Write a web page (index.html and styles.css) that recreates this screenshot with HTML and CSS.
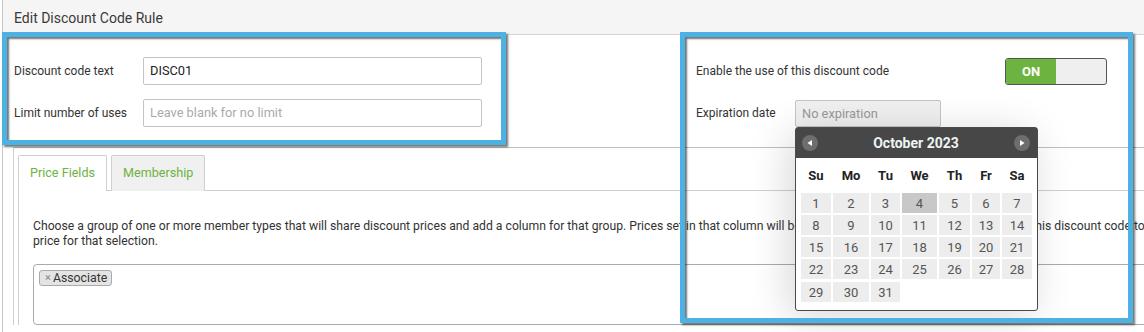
FILE: index.html
```html
<!DOCTYPE html>
<html>
<head>
<meta charset="utf-8">
<link rel="stylesheet" href="styles.css">
</head>
<body>
<div class="page">
  <div class="panel">
    <div class="header">Edit Discount Code Rule</div>
    <div class="top">
      <div class="col-left">
        <div class="field"><span class="lbl">Discount code text</span><div class="input">DISC01</div></div>
        <div class="field"><span class="lbl">Limit number of uses</span><div class="input placeholder">Leave blank for no limit</div></div>
      </div>
      <div class="col-right">
        <div class="field"><span class="lbl-r">Enable the use of this discount code</span>
          <div class="toggle"><span class="on">ON</span><span class="off"></span></div>
        </div>
        <div class="field"><span class="lbl-r2">Expiration date</span>
          <div class="date-wrap">
            <div class="input date placeholder">No expiration</div>
            <div class="datepicker">
              <div class="dp-head">
                <span class="dp-nav"><svg width="16" height="16" viewBox="0 0 16 16"><circle cx="8" cy="8" r="8" fill="#6e6e6e"/><path d="M5.5 8 L10 5 L10 11 Z" fill="#fff"/></svg></span>
                <span class="dp-title">October 2023</span>
                <span class="dp-nav"><svg width="16" height="16" viewBox="0 0 16 16"><circle cx="8" cy="8" r="8" fill="#6e6e6e"/><path d="M10.5 8 L6 5 L6 11 Z" fill="#fff"/></svg></span>
              </div>
              <div class="dp-body">
                <div class="dp-names"><span>Su</span><span>Mo</span><span>Tu</span><span>We</span><span>Th</span><span>Fr</span><span>Sa</span></div>
                <div class="dp-days">
                  <span>1</span><span>2</span><span>3</span><span class="today">4</span><span>5</span><span>6</span><span>7</span>
                  <span>8</span><span>9</span><span>10</span><span>11</span><span>12</span><span>13</span><span>14</span>
                  <span>15</span><span>16</span><span>17</span><span>18</span><span>19</span><span>20</span><span>21</span>
                  <span>22</span><span>23</span><span>24</span><span>25</span><span>26</span><span>27</span><span>28</span>
                  <span>29</span><span>30</span><span>31</span>
                </div>
              </div>
            </div>
          </div>
        </div>
      </div>
    </div>
    <div class="tabs-section">
      <div class="tabs"><div class="tab active">Price Fields</div><div class="tab">Membership</div></div>
      <div class="tab-content">
        <p class="desc">Choose a group of one or more member types that will share discount prices and add a column for that group. Prices set in that column will be applied to the member's price when using this discount code to determine the<br>price for that selection.</p>
        <div class="tagbox"><span class="tag"><span class="x">×</span>Associate</span></div>
      </div>
    </div>
  </div>
  <div class="hl hl-left"></div>
  <div class="hl hl-right"></div>
</div>
</body>
</html>
```

FILE: styles.css
```css
html, body {
  margin: 0;
  padding: 0;
  background: #fff;
  overflow: hidden;
}
body {
  font-family: Roboto, "Liberation Sans", Arial, sans-serif;
  color: #333;
  width: 1144px;
  height: 332px;
}
.page {
  position: relative;
  width: 1400px;
  height: 332px;
}
.panel {
  margin-left: 2px;
  border-left: 1px solid #c8c8c8;
  height: 332px;
}
.header {
  height: 34px;
  line-height: 36px;
  background: #f5f5f5;
  border-bottom: 1px solid #d6d6d6;
  padding-left: 11px;
  font-size: 14px;
  color: #3a3a3a;
}
.top {
  display: flex;
  height: 112px;
}
.col-left {
  width: 682px;
  padding: 22px 0 0 11px;
  display: flex;
  flex-direction: column;
  gap: 14px;
}
.field {
  display: flex;
  align-items: center;
  height: 28px;
}
.lbl {
  width: 129px;
  font-size: 12px;
}
.input {
  box-sizing: border-box;
  width: 339px;
  height: 28px;
  border: 1px solid #c4c4c4;
  border-radius: 2px;
  padding-left: 6px;
  font-size: 12.8px;
  line-height: 26px;
  color: #222;
  background: #fff;
}
.input.placeholder {
  color: #aaa;
}
.col-right {
  padding-top: 22px;
  display: flex;
  flex-direction: column;
  gap: 14px;
}
.lbl-r {
  width: 309px;
  font-size: 12px;
}
.lbl-r2 {
  width: 99px;
  font-size: 12px;
}
.toggle {
  box-sizing: border-box;
  width: 102px;
  height: 27px;
  border: 1px solid #555;
  border-radius: 3px;
  display: flex;
  overflow: hidden;
  background: #efefef;
}
.toggle .on {
  width: 50px;
  background: #6db33f;
  color: #fff;
  font-weight: bold;
  font-size: 13px;
  text-align: center;
  line-height: 25px;
}
.date-wrap {
  position: relative;
}
.input.date {
  width: 146px;
  height: 27px;
  background: #f0f0f0;
  line-height: 25px;
  color: #999;
}
.datepicker {
  position: absolute;
  top: 100%;
  left: 0;
  box-sizing: border-box;
  width: 243px;
  height: 184px;
  border: 1px solid #4a4a4a;
  border-radius: 3px;
  background: #fff;
  box-shadow: -6px 6px 40px rgba(0, 0, 0, 0.16);
  z-index: 2;
}
.dp-head {
  height: 30px;
  background: #474747;
  display: flex;
  align-items: center;
  justify-content: space-between;
  padding: 0 7px 0 6px;
}
.dp-nav {
  display: flex;
  width: 16px;
  height: 16px;
}
.dp-title {
  color: #eef3f5;
  font-weight: bold;
  font-size: 14px;
}
.dp-body {
  padding: 0 5px;
}
.dp-names, .dp-days {
  display: grid;
  grid-template-columns: 30px 36px 29px 35px 31px 28px 30px;
  column-gap: 2px;
}
.dp-names {
  height: 35px;
  align-items: center;
}
.dp-names span {
  text-align: center;
  font-weight: bold;
  font-size: 13px;
  color: #222;
}
.dp-days {
  grid-auto-rows: 20px;
  row-gap: 2.3px;
}
.dp-days span {
  background: #ededed;
  color: #555;
  font-size: 13px;
  line-height: 21px;
  text-align: center;
}
.dp-days span.today {
  background: #c8c8c8;
}
.tabs-section {
  margin-left: 10px;
  border-top: 1px solid #bdbdbd;
  border-left: 1px solid #cfcfcf;
  padding: 7px 0 0 4px;
}
.tabs {
  display: flex;
  gap: 4px;
  height: 35px;
}
.tab {
  box-sizing: border-box;
  height: 36px;
  border: 1px solid #cfcfcf;
  border-bottom: none;
  border-radius: 2px 2px 0 0;
  padding: 0 11px;
  font-size: 12.6px;
  line-height: 34px;
  white-space: nowrap;
  color: #6db33f;
  background: #f0f0f0;
}
.tab.active {
  background: #fff;
  position: relative;
  z-index: 1;
}
.tab-content {
  border-top: 1px solid #cfcfcf;
  border-left: 1px solid #cfcfcf;
  padding: 28px 0 0 14px;
}
.desc {
  margin: 0;
  font-size: 12.2px;
  line-height: 15px;
  color: #333;
  white-space: nowrap;
}
.tagbox {
  margin-top: 15px;
  box-sizing: border-box;
  height: 61px;
  border: 1px solid #aaa;
  border-radius: 4px;
  padding: 5px;
}
.tag {
  display: inline-flex;
  align-items: center;
  box-sizing: border-box;
  height: 16px;
  padding: 0 4px 0 5px;
  border: 1px solid #aaa;
  border-radius: 3px;
  background: #e4e4e4;
  font-size: 12.3px;
  line-height: 14px;
  color: #333;
  vertical-align: top;
}
.tag .x {
  color: #888;
  font-size: 11px;
  margin-right: 2px;
}
.hl {
  position: absolute;
  box-sizing: border-box;
  border: 5px solid #4cb2e3;
  box-shadow: 2px 2px 2px rgba(0, 0, 0, 0.55), inset 2px 2px 2px rgba(0, 0, 0, 0.55);
  z-index: 5;
}
.hl-left {
  left: 2px;
  top: 32px;
  width: 504px;
  height: 113px;
}
.hl-right {
  left: 680px;
  top: 32px;
  width: 453px;
  height: 291px;
}
```
